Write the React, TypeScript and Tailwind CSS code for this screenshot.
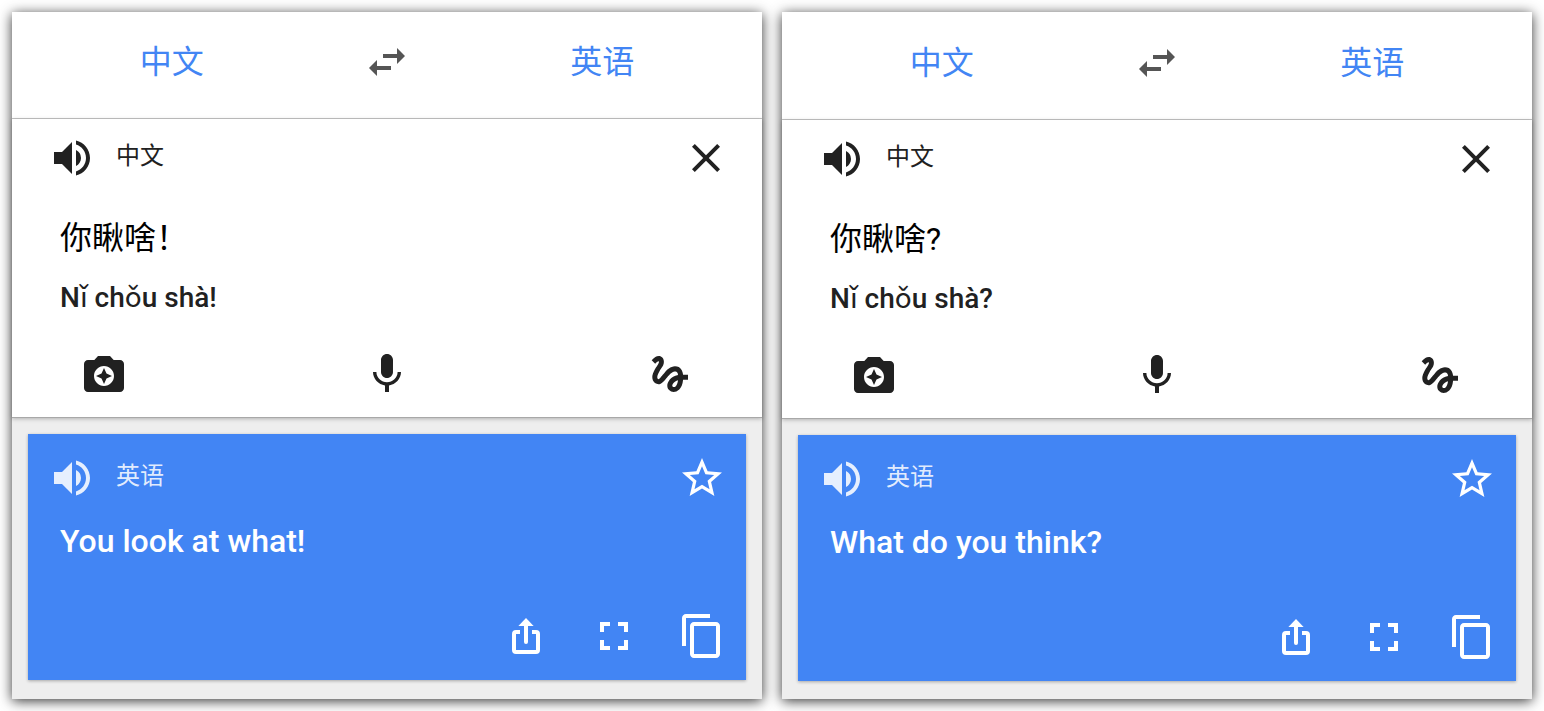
import React from 'react';
import {
    MdCameraEnhance,
    MdClose,
    MdContentCopy,
    MdFullscreen,
    MdGesture,
    MdMic,
    MdStarBorder,
    MdSwapHoriz,
    MdVolumeUp,
} from 'react-icons/md';

interface Translation {
    id: string;
    source: string;
    pinyin: string;
    result: string;
    className?: string;
}

const translations: Translation[] = [
    { id: 'statement', source: '你瞅啥！', pinyin: 'Nǐ chǒu shà!', result: 'You look at what!' },
    { id: 'question', source: '你瞅啥?', pinyin: 'Nǐ chǒu shà?', result: 'What do you think?', className: 'pt-px' },
];

const ShareIcon: React.FC = () => (
    <svg viewBox="0 0 24 24" className="size-12" aria-hidden="true">
        <path d="M12 3 8.2 7h7.6z" fill="currentColor" />
        <path d="M12 6v9" fill="none" stroke="currentColor" strokeWidth="2" strokeLinecap="round" />
        <path
            d="M9 10H7a1 1 0 0 0-1 1v8a1 1 0 0 0 1 1h10a1 1 0 0 0 1-1v-8a1 1 0 0 0-1-1h-2"
            fill="none"
            stroke="currentColor"
            strokeWidth="2"
        />
    </svg>
);

interface IconButtonProps {
    label: string;
    className?: string;
    children: React.ReactNode;
}

const IconButton: React.FC<IconButtonProps> = ({ label, className = '', children }) => (
    <button type="button" aria-label={label} className={`size-12 shrink-0 cursor-pointer ${className}`}>
        {children}
    </button>
);

// Third-tone vowels are set in the regular weight
const Pinyin: React.FC<{ text: string }> = ({ text }) => (
    <p className="mt-5 px-12 text-[28px] leading-10 font-medium">
        {text.split(/([ǎěǐǒǔǚ])/).map((part, i) =>
            i % 2 === 1 ? <span key={i} className="font-normal">{part}</span> : part
        )}
    </p>
);

const TranslateCard: React.FC<{ item: Translation }> = ({ item }) => (
    <article className={`flex flex-col bg-white shadow-[0_2px_12px_rgba(0,0,0,0.8)] ${item.className ?? ''}`}>
        <header className="grid grid-cols-3 items-center justify-items-center border-b border-[#c4c4c4] px-13 pt-6.5 pb-8 text-[32px] leading-12 text-[#4285f4]">
            <button type="button" className="cursor-pointer">中文</button>
            <IconButton label="Swap languages" className="text-[#555]">
                <MdSwapHoriz className="size-12" />
            </IconButton>
            <button type="button" className="cursor-pointer">英语</button>
        </header>

        <section className="relative border-b border-[#a8a8a8] pt-[15px] pb-[19px] text-[#212121] shadow-[0_1px_4px_rgba(0,0,0,0.25)]">
            <div className="flex items-center pr-8 pl-9">
                <IconButton label="Listen to source">
                    <MdVolumeUp className="size-12" />
                </IconButton>
                <span className="ml-5 flex-1 pb-1 text-2xl">中文</span>
                <IconButton label="Clear text">
                    <MdClose className="size-12" />
                </IconButton>
            </div>
            <p className="mt-9 px-12 text-[32px] leading-10 text-black">{item.source}</p>
            <Pinyin text={item.pinyin} />
            <div className="mt-8 flex justify-between px-17">
                <IconButton label="Camera input">
                    <MdCameraEnhance className="size-12" />
                </IconButton>
                <IconButton label="Voice input">
                    <MdMic className="size-12" />
                </IconButton>
                <IconButton label="Handwriting input">
                    <MdGesture className="size-12" />
                </IconButton>
            </div>
        </section>

        <div className="flex-1 bg-[#eee] px-4 pt-4 pb-[18px]">
            <section className="bg-[#4285f4] p-5 text-white shadow-[0_1px_3px_rgba(0,0,0,0.3)]">
                <div className="flex items-center">
                    <IconButton label="Listen to translation" className="text-white/87">
                        <MdVolumeUp className="size-12" />
                    </IconButton>
                    <span className="ml-5 flex-1 pb-1 text-2xl text-white/87">英语</span>
                    <IconButton label="Save translation">
                        <MdStarBorder className="size-12" />
                    </IconButton>
                </div>
                <p className="mt-[19px] px-3 text-[32px] leading-10 font-medium">{item.result}</p>
                <div className="mt-[51px] flex justify-end gap-10">
                    <IconButton label="Share">
                        <ShareIcon />
                    </IconButton>
                    <IconButton label="Fullscreen">
                        <MdFullscreen className="size-12" />
                    </IconButton>
                    <IconButton label="Copy">
                        <MdContentCopy className="size-12" />
                    </IconButton>
                </div>
            </section>
        </div>
    </article>
);

const App: React.FC = () => (
    <main className="grid grid-cols-2 gap-5 bg-white p-3 font-[Roboto,'Noto_Sans_CJK_SC',sans-serif]" lang="zh-CN">
        {translations.map((item) => (
            <TranslateCard key={item.id} item={item} />
        ))}
    </main>
);

export default App;
